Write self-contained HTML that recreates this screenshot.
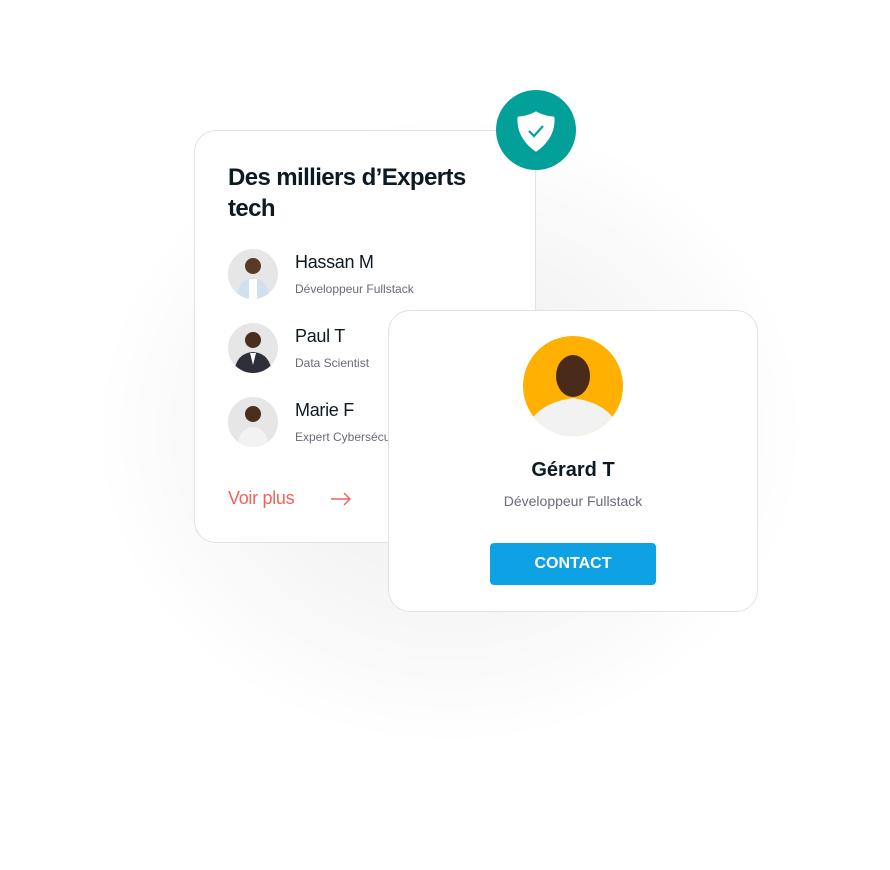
<!DOCTYPE html>
<html><head><meta charset="utf-8"><style>
body{margin:0;width:890px;height:870px;background:#fff;position:relative;overflow:hidden;font-family:"Liberation Sans",sans-serif}
.glow{position:absolute;left:90px;top:110px;width:720px;height:640px;border-radius:50%;background:radial-gradient(ellipse at center,rgba(0,0,0,0.07) 0%,rgba(0,0,0,0.035) 40%,rgba(0,0,0,0) 70%)}
.card{position:absolute;background:#fff;border:1px solid #e2e2e4;border-radius:22px;box-sizing:border-box}
.c1{left:194px;top:130px;width:342px;height:413px}
.c2{left:388px;top:310px;width:370px;height:302px}
h1{position:absolute;left:33px;top:31px;margin:0;font-size:24px;line-height:31px;font-weight:bold;color:#0d1a22;letter-spacing:-0.6px}
.av{position:absolute;left:33px;width:50px;height:50px;border-radius:50%;background:#e6e6e6;overflow:hidden}
.nm{position:absolute;left:100px;font-size:18px;color:#0d1a22;letter-spacing:-0.3px}
.sb{position:absolute;left:100px;font-size:12px;color:#6a6a78}
.badge{position:absolute;left:496px;top:90px;width:80px;height:80px;border-radius:50%;background:#03a09a}
.btn{position:absolute;left:101px;top:232px;width:166px;height:42px;background:#0ea1e3;border-radius:4px;color:#fff;font-weight:bold;font-size:16px;text-align:center;line-height:42px}
</style></head><body>
<div class="glow"></div>
<div class="card c1">
<h1>Des milliers d’Experts<br>tech</h1>
<div class="av" style="top:118px"><svg width="50" height="50"><circle cx="25" cy="17" r="8" fill="#5a3a26"/><path d="M8 50 Q10 30 25 29 Q40 30 42 50Z" fill="#cfe1ef"/><rect x="21" y="30" width="8" height="20" fill="#fff"/></svg></div>
<div class="nm" style="top:121px">Hassan M</div><div class="sb" style="top:151px">Développeur Fullstack</div>
<div class="av" style="top:192px"><svg width="50" height="50"><circle cx="25" cy="17" r="8" fill="#4a2e1e"/><path d="M6 50 Q8 30 25 29 Q42 30 44 50Z" fill="#2d2f3a"/><path d="M22 30 L25 42 L28 30Z" fill="#fff"/></svg></div>
<div class="nm" style="top:195px">Paul T</div><div class="sb" style="top:225px">Data Scientist</div>
<div class="av" style="top:266px"><svg width="50" height="50"><circle cx="25" cy="17" r="8" fill="#4a2e1e"/><path d="M9 50 Q11 31 25 30 Q39 31 41 50Z" fill="#f2f2f2"/></svg></div>
<div class="nm" style="top:269px">Marie F</div><div class="sb" style="top:299px">Expert Cybersécurité</div>
<div style="position:absolute;left:33px;top:357px;font-size:18px;color:#f0635c;letter-spacing:-0.3px">Voir plus</div>
<svg style="position:absolute;left:135px;top:361px" width="22" height="14"><path d="M1 7H20M14 1L20 7L14 13" stroke="#f0635c" stroke-width="1.4" fill="none"/></svg>
</div>
<div class="badge"><svg width="80" height="80"><path d="M40 23 Q47 27 57 28 Q58 47 40 60 Q22 47 23 28 Q33 27 40 23Z" fill="#fff" stroke="#fff" stroke-width="3" stroke-linejoin="round"/><path d="M33 41L38 46L47 36" stroke="#03a09a" stroke-width="2.2" fill="none"/></svg></div>
<div class="card c2">
<div style="position:absolute;left:134px;top:25px;width:100px;height:100px;border-radius:50%;background:#ffb000;overflow:hidden"><svg width="100" height="100"><ellipse cx="50" cy="40" rx="17" ry="21" fill="#4a2a18"/><path d="M2 100 Q8 68 50 62 Q92 68 98 100Z" fill="#f2f2f2"/></svg></div>
<div style="position:absolute;left:0;width:100%;top:148px;text-align:center;font-size:20px;font-weight:bold;color:#0d1a22">Gérard T</div>
<div style="position:absolute;left:0;width:100%;top:182px;text-align:center;font-size:14px;color:#6a6a78">Développeur Fullstack</div>
<div class="btn">CONTACT</div>
</div>
</body></html>
